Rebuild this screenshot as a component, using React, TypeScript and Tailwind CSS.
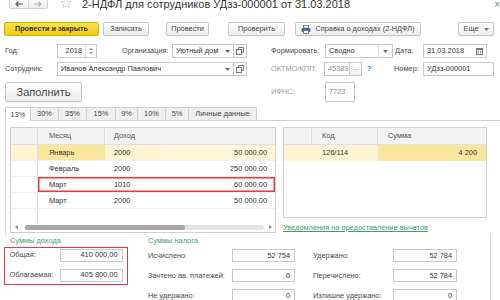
import React from "react";

const Tri = ({ c = "#666" }: { c?: string }) => (
  <svg width="5" height="3" viewBox="0 0 5 3" className="shrink-0">
    <path d="M0 0H5L2.5 3Z" fill={c} />
  </svg>
);

const OpenIco = () => (
  <svg width="8" height="8" viewBox="0 0 8 8" fill="none" stroke="#666" strokeWidth="0.9">
    <rect x="0.5" y="2.5" width="5" height="5" />
    <path d="M2.5 2.5V0.5H7.5V5.5H5.5" />
  </svg>
);

const btn =
  "h-full border border-[#c6c6c6] rounded-[2px] bg-linear-to-b from-white to-[#ececec] flex items-center justify-center text-[#444] shadow-[0_1px_0_rgba(0,0,0,0.05)] shrink-0";
const inp = "h-full border border-[#c8c8c8] bg-white flex items-center shrink-0";
const lbl = "text-[#4a4a4a] shrink-0 whitespace-nowrap";

function Row({
  label,
  lw,
  iw,
  value,
}: {
  label: string;
  lw: string;
  iw: string;
  value: string;
}) {
  return (
    <div className="flex items-center h-[13px]">
      <div className={`${lbl} ${lw}`}>{label}</div>
      <div className={`${inp} ${iw} justify-end pr-[4px]`}>{value}</div>
    </div>
  );
}

export default function App() {
  const tabs: [string, string][] = [
    ["13%", "w-[26px]"],
    ["30%", "w-[28px]"],
    ["35%", "w-[28px]"],
    ["15%", "w-[29px]"],
    ["9%", "w-[22px]"],
    ["10%", "w-[28px]"],
    ["5%", "w-[23px]"],
    ["Личные данные", "w-[68px]"],
  ];
  const pale = "bg-[#fcf3d2]";
  const dark = "bg-[#f9e69e]";
  return (
    <div className="w-[500px] h-[300px] overflow-hidden bg-white text-[#333] font-['Liberation_Sans',Arial,sans-serif] text-[7.4px] leading-none">
      {/* title row */}
      <div className="flex items-center h-[16px] -mt-[7px]">
        <div className="ml-[9px] w-[39px] h-[16px] border border-[#cfcfcf] rounded-[2px] bg-linear-to-b from-white to-[#efefef] flex shrink-0">
          <div className="w-[19px] border-r border-[#d6d6d6] flex items-center justify-center pt-[6px]">
            <svg width="8" height="6" viewBox="0 0 8 6" fill="none" stroke="#555" strokeWidth="1.2">
              <path d="M8 3H1.2M3.5 0.6L1 3L3.5 5.4" />
            </svg>
          </div>
          <div className="flex-1 flex items-center justify-center pt-[6px]">
            <svg width="8" height="6" viewBox="0 0 8 6" fill="none" stroke="#aaa" strokeWidth="1.2">
              <path d="M0 3H6.8M4.5 0.6L7 3L4.5 5.4" />
            </svg>
          </div>
        </div>
        <svg width="12" height="12" viewBox="0 0 24 24" className="ml-[12px] translate-y-[2px] shrink-0" fill="none" stroke="#c4c4c4" strokeWidth="1.5">
          <path d="M12 2l3.09 6.26L22 9.27l-5 4.87 1.18 6.88L12 17.77l-6.18 3.25L7 14.14 2 9.27l6.91-1.01L12 2z" />
        </svg>
        <div className="ml-[10px] text-[11px] leading-[16px] translate-y-[3px] text-[#333] whitespace-nowrap">
          2-НДФЛ для сотрудников УДзз-000001 от 31.03.2018
        </div>
        <div className="ml-auto mr-[0px] text-[10px] text-[#777] translate-y-[4px]">×</div>
      </div>

      {/* toolbar */}
      <div className="flex h-[14px] mt-[13px]">
        <div className="ml-[4px] w-[95px] h-full border border-[#d4b200] rounded-[2px] bg-linear-to-b from-[#fbe04a] to-[#f2cb05] flex items-center justify-center font-bold text-[7.3px] text-[#333]">
          Провести и закрыть
        </div>
        <div className={`${btn} ml-[4px] w-[46px]`}>Записать</div>
        <div className={`${btn} ml-[17px] w-[43px]`}>Провести</div>
        <div className={`${btn} ml-[19px] w-[57px]`}>Проверить</div>
        <div className={`${btn} ml-[10px] w-[126px] gap-[4px]`}>
          <svg width="10" height="9" viewBox="0 0 10 9">
            <rect x="2.5" y="0.5" width="5" height="2.5" fill="#fff" stroke="#4d6a92" strokeWidth="0.8" />
            <rect x="0.5" y="3" width="9" height="4" rx="0.8" fill="#4d6a92" />
            <rect x="2.5" y="5.5" width="5" height="3" fill="#fff" stroke="#4d6a92" strokeWidth="0.8" />
          </svg>
          <span>Справка о доходах (2-НДФЛ)</span>
        </div>
        <div className={`${btn} ml-[37px] w-[36px] gap-[5px]`}>
          <span>Еще</span>
          <Tri c="#777" />
        </div>
      </div>

      {/* row Год */}
      <div className="flex items-center h-[14px] mt-[8px]">
        <div className={`${lbl} w-[57px] pl-[5px]`}>Год:</div>
        <div className={`${inp} w-[40px]`}>
          <div className="flex-1 text-right pr-[3px]">2018</div>
          <div className="w-[11px] h-full border-l border-[#d6d6d6] flex flex-col items-center justify-center gap-[2px]">
            <svg width="4" height="2" viewBox="0 0 4 2"><path d="M0 2H4L2 0Z" fill="#888" /></svg>
            <svg width="4" height="2" viewBox="0 0 4 2"><path d="M0 0H4L2 2Z" fill="#888" /></svg>
          </div>
        </div>
        <div className={`${lbl} ml-[25px] w-[50px]`}>Организация:</div>
        <div className={`${inp} w-[62px]`}>
          <div className="flex-1 overflow-hidden whitespace-nowrap pl-[3px]">Уютный дом</div>
          <div className="w-[11px] h-full flex items-center justify-center">
            <Tri />
          </div>
        </div>
        <div className={`${inp} w-[13px] border-l-0 justify-center`}>
          <OpenIco />
        </div>
        <div className={`${lbl} ml-[24px] w-[54px]`}>Формировать:</div>
        <div className={`${inp} w-[68px]`}>
          <div className="flex-1 pl-[3px]">Сводно</div>
          <div className="w-[14px] h-full border-l border-[#e2e2e2] flex items-center justify-center">
            <Tri />
          </div>
        </div>
        <div className={`${lbl} ml-[2px] w-[28px]`}>Дата:</div>
        <div className={`${inp} w-[64px]`}>
          <div className="flex-1 pl-[3px]">31.03.2018</div>
          <div className="w-[14px] h-full flex items-center justify-center">
            <svg width="7" height="7" viewBox="0 0 7 7">
              <rect x="0" y="0" width="7" height="7" fill="#777" />
              <rect x="1" y="2" width="5" height="4" fill="#fff" />
              <rect x="1.6" y="2.6" width="1.2" height="1.2" fill="#777" />
              <rect x="4.2" y="2.6" width="1.2" height="1.2" fill="#777" />
              <rect x="1.6" y="4.2" width="1.2" height="1.2" fill="#777" />
              <rect x="4.2" y="4.2" width="1.2" height="1.2" fill="#777" />
            </svg>
          </div>
        </div>
      </div>

      {/* row Сотрудник */}
      <div className="flex items-center h-[14px] mt-[4px]">
        <div className={`${lbl} w-[57px] pl-[5px]`}>Сотрудник:</div>
        <div className={`${inp} w-[177px]`}>
          <div className="flex-1 pl-[3px]">Иванов Александр Павлович</div>
          <div className="w-[11px] h-full flex items-center justify-center">
            <Tri />
          </div>
        </div>
        <div className={`${inp} w-[13px] border-l-0 justify-center`}>
          <OpenIco />
        </div>
        <div className="text-[#9a9a9a] shrink-0 ml-[24px] w-[53px]">ОКТМО/КПП:</div>
        <div className={`${inp} w-[26px] overflow-hidden text-[#8a8a8a] pl-[3px] whitespace-nowrap`}>45389</div>
        <div className={`${inp} w-[12px] border-l-0 justify-center text-[#777] pb-[2px] bg-linear-to-b from-white to-[#eee]`}>...</div>
        <div className="ml-[5px] w-[4px] text-[#2a7fd4] font-bold">?</div>
        <div className={`${lbl} ml-[23px] w-[29px]`}>Номер:</div>
        <div className={`${inp} w-[71px] pl-[3px]`}>УДзз-000001</div>
      </div>

      {/* row Заполнить */}
      <div className="flex items-center h-[20px] mt-[6px]">
        <div className={`${btn} ml-[5px] w-[77px] text-[11px] text-[#333]`}>Заполнить</div>
        <div className="text-[#9a9a9a] shrink-0 ml-[189px] w-[54px]">ИФНС:</div>
        <div className={`${inp} w-[30px] h-[13px] pl-[3px] text-[#8a8a8a]`}>7723</div>
      </div>

      {/* tabs */}
      <div className="flex h-[14px] mt-[5px] pl-[5px]">
        {tabs.map(([t, w], i) => (
          <div
            key={t}
            className={`${w} h-full flex items-center justify-center shrink-0 text-[#444] ${
              i === 0
                ? "bg-white border-l border-t border-r border-[#cfcfcf]"
                : "bg-[#efefef] border-t border-r border-b border-[#cfcfcf]"
            }`}
          >
            {t}
          </div>
        ))}
        <div className="flex-1 border-b border-[#cfcfcf]" />
      </div>

      {/* tab panel */}
      <div className="ml-[5px] h-[114px] border-l border-[#dcdcdc] pl-[4px] pt-[6px] flex">
        {/* left table */}
        <div className="w-[266px] h-[106px] border border-[#cfcfcf] flex flex-col shrink-0">
          <div className="h-[17px] flex bg-[#f2f2f2] border-b border-[#e0e0e0] text-[#555]">
            <div className="w-[27px] border-r border-[#dcdcdc]" />
            <div className="w-[67px] border-r border-[#dcdcdc] pl-[11px] flex items-center">Месяц</div>
            <div className="w-[55px] pl-[9px] flex items-center">Доход</div>
            <div className="flex-1" />
          </div>
          {[
            ["Январь", "2000", "50 000,00", "sel"],
            ["Февраль", "2000", "250 000,00", ""],
            ["Март", "1010", "60 000,00", "red"],
            ["Март", "2000", "50 000,00", ""],
          ].map(([m, c, s, k], i) => (
            <div key={i} className="h-[16px] flex border-b border-[#f0f0f0]">
              <div className={`w-[27px] border-r border-[#dcdcdc] ${k === "sel" ? pale : ""}`} />
              <div
                className={`flex-1 flex ${
                  k === "red" ? "shadow-[inset_0_0_0_1.5px_#e8383d]" : ""
                }`}
              >
                <div className={`w-[67px] pl-[11px] flex items-center ${k === "sel" ? dark : ""}`}>{m}</div>
                <div className={`w-[55px] pl-[9px] flex items-center ${k === "sel" ? pale : ""}`}>{c}</div>
                <div className={`flex-1 flex items-center justify-end pr-[8px] ${k === "sel" ? "bg-[#fdf6db]" : ""}`}>{s}</div>
              </div>
            </div>
          ))}
          <div className="flex-1 flex">
            <div className="w-[27px] border-r border-[#dcdcdc]" />
          </div>
          <div className="h-[9px] flex items-center pb-[1px]">
            <svg width="3" height="4" viewBox="0 0 3 4" className="ml-[4px]"><path d="M3 0V4L0 2Z" fill="#888" /></svg>
            <div className="ml-[7px] w-[239px] h-[5px] rounded-full bg-[#e4e4e4] flex">
              <div className="w-[160px] h-full rounded-full bg-[#a6a6a6]" />
            </div>
            <svg width="3" height="4" viewBox="0 0 3 4" className="ml-[5px]"><path d="M0 0V4L3 2Z" fill="#888" /></svg>
          </div>
        </div>

        {/* right side */}
        <div className="ml-[7px] w-[204px] flex flex-col shrink-0">
          <div className="h-[91px] border border-[#cfcfcf] flex flex-col">
            <div className="h-[17px] flex bg-[#f2f2f2] border-b border-[#e0e0e0] text-[#555]">
              <div className="w-[28px] border-r border-[#dcdcdc]" />
              <div className="w-[66px] border-r border-[#dcdcdc] pl-[10px] flex items-center">Код</div>
              <div className="flex-1 pl-[10px] flex items-center">Сумма</div>
            </div>
            <div className="h-[16px] flex shadow-[inset_0_0_0_1.5px_#e8383d]">
              <div className={`w-[28px] ${pale}`} />
              <div className={`w-[66px] pl-[10px] flex items-center ${pale}`}>126/114</div>
              <div className={`flex-1 flex items-center justify-end pr-[9px] ${dark}`}>4 200</div>
            </div>
          </div>
          <div className="mt-[6px] text-[#3a9f68] underline underline-offset-[1px] whitespace-nowrap">
            Уведомления на предоставление вычетов
          </div>
        </div>
      </div>

      {/* bottom sums */}
      <div className="w-[491px] h-[70px] border-r border-[#d6d6d6] flex">
        <div className="ml-[4px] w-[124px] shrink-0">
          <div className="h-[10px] mt-[2px] pl-[6px] text-[#3fa46c]">Суммы дохода</div>
          <div className="h-[38px] border-[1.5px] border-[#e8383d] pt-[0.5px] pl-[4.5px]">
            <Row label="Общая:" lw="w-[50px]" iw="w-[63px]" value="410 000,00" />
            <div className="mt-[7px]">
              <Row label="Облагаемая:" lw="w-[50px]" iw="w-[63px]" value="405 800,00" />
            </div>
          </div>
        </div>
        <div className="ml-[20px] w-[147px] shrink-0">
          <div className="h-[10px] mt-[2px] text-[#3fa46c]">Суммы налога</div>
          <div className="mt-[2px] flex flex-col gap-[7px]">
            <Row label="Исчислено:" lw="w-[84px]" iw="w-[63px]" value="52 754" />
            <Row label="Зачтено ав. платежей:" lw="w-[84px]" iw="w-[63px]" value="0" />
            <Row label="Не удержано:" lw="w-[84px]" iw="w-[63px]" value="0" />
          </div>
        </div>
        <div className="ml-[18px] w-[144px] shrink-0">
          <div className="h-[10px] mt-[2px]" />
          <div className="mt-[2px] flex flex-col gap-[7px]">
            <Row label="Удержано:" lw="w-[80px]" iw="w-[64px]" value="52 784" />
            <Row label="Перечислено:" lw="w-[80px]" iw="w-[64px]" value="52 784" />
            <Row label="Излишне удержано:" lw="w-[80px]" iw="w-[64px]" value="0" />
          </div>
        </div>
      </div>
    </div>
  );
}
